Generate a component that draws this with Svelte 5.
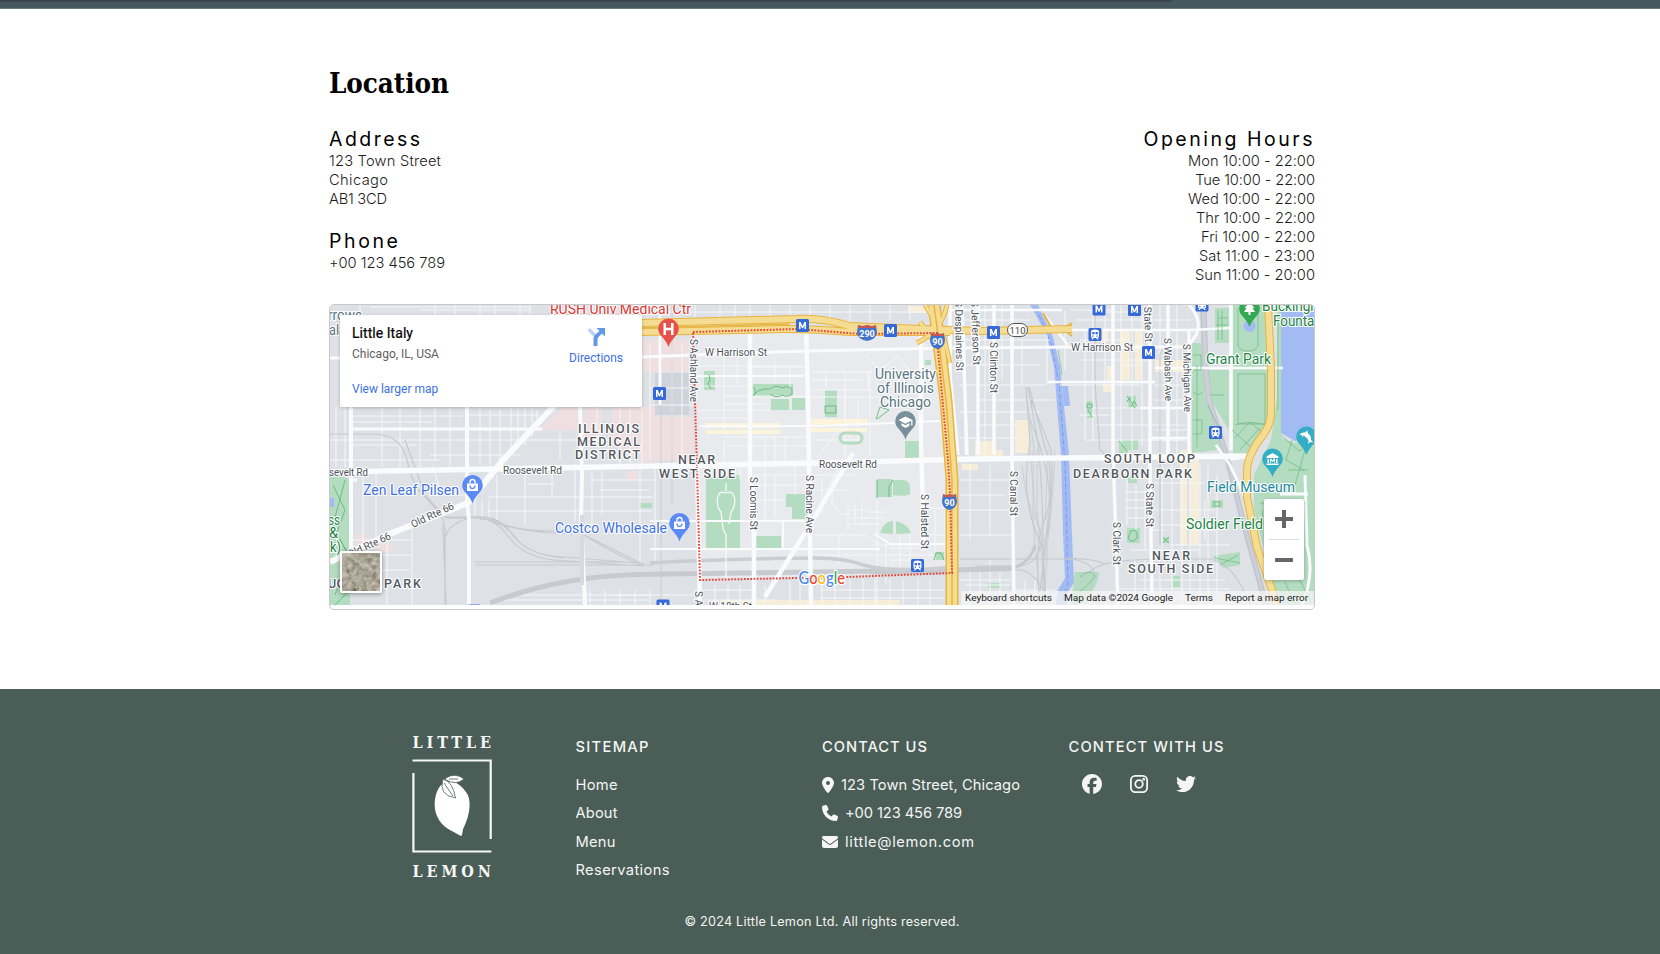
<script>
  // Spreads the letters of an element so that its text fills the given width.
  function fit(node, width) {
    const range = document.createRange();
    range.selectNodeContents(node);
    const natural = range.getBoundingClientRect().width;
    const count = node.textContent.length - 1;
    node.style.letterSpacing = (width - natural) / count + 'px';
  }

  const hours = [
    ['Mon 10:00 - 22:00', 127], ['Tue 10:00 - 22:00', 120], ['Wed 10:00 - 22:00', 127],
    ['Thr 10:00 - 22:00', 119], ['Fri 10:00 - 22:00', 114], ['Sat 11:00 - 23:00', 116], ['Sun 11:00 - 20:00', 120]
  ];
  const sitemap = [['Home', 42], ['About', 42], ['Menu', 40], ['Reservations', 94]];

  // text, x, baseline, length, class, rotation
  const labels = [
    ['rrows', 328, 320, 34, 'slate'], ['al', 329, 335, 10, 'slate'],
    ['RUSH Univ Medical Ctr', 550, 314, 141, 'red'],
    ['University', 875, 379, 61, 'slate'], ['of Illinois', 877, 393, 57, 'slate'], ['Chicago', 880, 407, 51, 'slate'],
    ['ILLINOIS', 578, 432.5, 61, 'area'], ['MEDICAL', 577, 445.5, 63, 'area'], ['DISTRICT', 575, 458.5, 65, 'area'],
    ['NEAR', 678, 464, 37, 'area'], ['WEST SIDE', 659, 477.5, 76, 'area'],
    ['SOUTH LOOP', 1104, 462.5, 91, 'area'], ['DEARBORN PARK', 1073, 477.5, 119, 'area'],
    ['NEAR', 1152, 559.5, 38, 'area'], ['SOUTH SIDE', 1128, 573, 85, 'area'],
    ['PARK', 384, 587.5, 37, 'area'], ['UG', 328, 587.5, 17, 'area'],
    ['Zen Leaf Pilsen', 363, 495, 96, 'shop'], ['Costco Wholesale', 555, 533, 112, 'shop'],
    ['ss', 328, 525, 12, 'park'], ['&', 329, 538, 9, 'park'], ['k)', 330, 552, 11, 'park'],
    ['Grant Park', 1206, 364, 65, 'park'], ['Buckingham', 1262, 311, 75, 'park'], ['Fountain', 1273, 325.5, 52, 'park'],
    ['Soldier Field', 1186, 529, 77, 'park'], ['Field Museum', 1207, 492, 88, 'teal'],
    ['W Harrison St', 705, 355.5, 62, 'road'], ['W Harrison St', 1071, 350.5, 62, 'road'],
    ['Roosevelt Rd', 819, 468, 58, 'road'], ['Roosevelt Rd', 503, 473.5, 59, 'road'], ['sevelt Rd', 329, 475.5, 39, 'road'],
    ['W 18th St', 709, 610, 43, 'road'],
    ['Old Rte 66', 413, 528, 46, 'road', -25], ['Old Rte 66', 350, 558, 46, 'road', -25],
    ['S Ashland Ave', 690, 339, 63, 'road', 90], ['S Loomis St', 750, 477, 53, 'road', 90],
    ['S Racine Ave', 806, 475, 58, 'road', 90], ['S Halsted St', 921, 494, 55, 'road', 90],
    ['S Desplaines St', 955, 301, 70, 'road', 89], ['S Jefferson St', 971, 301, 64, 'road', 88],
    ['S Clinton St', 990, 342, 51, 'road', 90], ['S Canal St', 1010, 471, 45, 'road', 90],
    ['S Clark St', 1113, 522, 43, 'road', 90], ['S State St', 1146, 483, 44, 'road', 90],
    ['State St', 1144, 307, 35, 'road', 88], ['S Wabash Ave', 1164, 338, 63, 'road', 89],
    ['S Michigan Ave', 1183, 344, 68, 'road', 89], ['S Ashland', 695, 591, 45, 'road', 90]
  ];
  const metro = [[802.5, 325.5], [890.5, 330.5], [659.5, 393.5], [993.5, 332.5], [1099, 309], [1134.5, 309.5], [1148.5, 352.5], [663, 606]];
  const trains = [[1095, 334.5], [1202, 305], [1215.5, 432.5], [917.5, 565.5], [474, 611]];
  const shields = [['290', 867, 333, 20], ['90', 937.5, 341, 15], ['90', 949.5, 502, 15]];
  const pins = [
    [668.5, 329, '#e8514a', 'H'], [472.5, 485.5, '#5b8af5', 'bag'], [679.5, 523.5, '#5b8af5', 'bag'],
    [905.5, 421.5, '#78909c', 'cap'], [1249.5, 309, '#34a853', 'tree'], [1272.5, 459, '#34aec4', 'museum'], [1306.5, 437, '#34aec4', 'fish']
  ];
</script>

<div class="page">
  <div class="strip"><i></i></div>

  <main>
    <h1><span use:fit={120}>Location</span></h1>
    <div class="info">
      <section>
        <h2><span use:fit={91}>Address</span></h2>
        <p><span use:fit={112}>123 Town Street</span></p>
        <p><span use:fit={59}>Chicago</span></p>
        <p><span use:fit={58}>AB1 3CD</span></p>
        <h2 class="second"><span use:fit={69}>Phone</span></h2>
        <p><span use:fit={116}>+00 123 456 789</span></p>
      </section>
      <section class="hours">
        <h2><span use:fit={169}>Opening Hours</span></h2>
        {#each hours as [line, width]}<p><span use:fit={width}>{line}</span></p>{/each}
      </section>
    </div>

    <div class="map">
      <svg class="canvas" viewBox="330 305 984 300" width="984" height="300">
        <defs>
          <filter id="ground" x="0" y="0" width="1" height="1">
            <feTurbulence type="fractalNoise" baseFrequency=".2" numOctaves="4" seed="8" />
            <feColorMatrix values=".55 .45 0 0 .06  .55 .42 0 0 .04  .5 .36 0 0 .02  0 0 0 0 1" />
            <feComponentTransfer>
              <feFuncR type="linear" slope=".8" intercept="-.04" /><feFuncG type="linear" slope=".8" intercept="-.04" /><feFuncB type="linear" slope=".8" intercept="-.05" />
            </feComponentTransfer>
          </filter>
        </defs>
        <rect x="330" y="305" width="984" height="300" fill="#dee2e7" />

        <g fill="#efdfe1">
          <path d="M640 340h48v32h-48zM538 430l27-23h13v23zM585 417h-3v22h20v-32h-17zM612 407h46v48h-30l-16-12zM650 417h43v43h-43zM640 450h13v13h-13zM627 471h11v9h-11zM356 534h11v12h-11zM376 543h16v9h-16z" />
        </g>
        <path d="M655 373h34v42h-34z" fill="#cfd4dc" />
        <path d="M693 332L800 329 823 331 860 333 938 333 943 400 952 573 700 579 697 467z" fill="#e8eaee" />
        <g fill="#f6eed8">
          <path d="M1015 420h14v33h-14zM975 441h18v13h-18zM1097 330h11v12h-11zM1120 330h10v50h-10zM1135 330h7v50h-7zM1103 384h9v8h-9zM1155 360h30v12h-30zM962 464h16v6h-16zM975 450h28v10h-28zM1180 450h7v95h-7zM1190 450h9v95h-9zM908 306h25v7h-25zM1107 366h7v16h-7zM720 600h180v5h-180z" />
          <path d="M705 423h75v5h-75zM706 430h74v4h-74zM811 419h57v6h-57zM811 428h56v4h-56z" fill="#fcf5dc" />
        </g>
        <g fill="#b4dcc0">
          <path d="M330 477q14-3 20 4v124h-20zM1192 343h9l8 60 18 46-35 4zM1208 370h21v60l-17-28zM1233 305h34v120l-17 29h-17zM1215 308h14v35h-14zM1277 305h4v133l14 5 19-4v166h-36l-24-95v-35l17-35 6-42z" />
          <path d="M704 371h11v19h-11zM753 384h40v13h-40zM706 478l34-3v73h-34zM756 536h25v12h-25zM786 494h21v25h-15v-12h-6zM877 479h15v18h-15zM893 480h10q7 1 7 7v7q-4 3-17 1zM880 533q4-12 13-12v13zM896 521q12 3 15 12l-15 1zM1000 583h-12v5h12zM1128 440h10v10h-10zM1128 476h9v7h-9z" />
          <path d="M771 399h18v11h-18zM792 398h13v12h-13zM825 390h12v27h-12zM905 441h16v17h-16zM1127 528h13v15h-13zM1119 440h9v13h-9zM1211 500h12v8h-12zM1163 537h6v6h-6zM1173 576h7v11h-7zM1128 396h8v12h-8zM1087 401h6v17h-6zM1075 572h24q-2 20-20 33h-8zM1212 556l28-4v13l-16 3zM640 503h12v5h-12zM934 552h10v8h-10zM925 360h6v5h-6z" />
        </g>
        <g fill="#a3bbf3">
          <path d="M1281 312h33v125l-19 4-14-8zM1030 305h8l15 32 7 30 9 88 3 80 2 48-7 10v12h-11l2-15 7-12-2-45-2-78-7-88-8-34z" />
          <circle cx="1249.500" cy="326" r="6" /><path d="M1062 386h6l2 20h-6zM330 498h4v9h-4z" />
        </g>
        <path d="M1036 308l15 35 8 40 6 80 3 120-6 20" fill="none" stroke="#6e94e8" stroke-width=".8" stroke-dasharray="5 2.500" />

        <g fill="none" stroke="#f5f7f9" stroke-width="1">
          <path d="M336 407v60M345 407v60M360 305v10M382 407v60M400 407v65M420 407v60M435 407v55M450 407v60M480 407v55M490 410v55M500 410v50M511 407v45M518 407v42M525 407v38M532 407v30M537 410v20M352 416h110M352 422h80M330 440h210M352 445h65M430 455h90M330 460h110M470 415h70M363 475v75M376 475v65M412 525v80M352 540h60M352 555h60M352 570h58M387 540v65M430 495h40M432 465l10 30" />
          <path d="M488 497h165M488 511h165M497 475v45M475 500v15M482 500v17M489 500v18M525 470v55M552 471v25M527 484h27M575 466v55M592 471v62M602 471v43M640 466v100M655 466v100M590 480h66M600 490h50M560 430v30M540 440h70M597 407v30M620 407v60M630 407v56M642 407v56M500 600h150M520 595h130M590 590v15M605 590v15M620 590v15M635 590v15M650 590v15M610 595h90M420 310h110M435 305v10M455 305v10M480 305v10M495 305v10M520 305v10M530 305v10M370 307h160" />
          <path d="M695 305v12M720 305v13M735 305v13M750 305v13M770 305v13M790 305v13M810 305v13M830 305v15M850 305v18M870 305v18M890 305v15M910 305v15M650 312h285M650 345v115M660 340v30M672 345v110M682 345v110M650 388h43M650 405h43M700 366h100M700 386h52M724 358v72M737 358v26M775 358v25M790 368v20M700 410h70M700 418h50M724 396h80M724 404h42M752 397h130M724 437h85M724 446h85M724 440v22M765 437v70M775 437v30M785 437v25M752 367h55M780 375h27M812 372h60M812 380h50M868 372v18M845 372v55M826 373v15M812 390h60M845 388v70M858 400v40M870 370v85M820 455l20-28 20 20M812 440h50M865 355l15 15 18-14 14 18M880 370l12 18 18-22" />
          <path d="M755 475h50M755 485h45M765 477v45M775 477v40M795 465v30M758 500h25M812 475h45M812 490h38M822 478v35M832 480v25M840 465l-15 30M830 500l10 14h10M845 510h25M848 505v25M855 505v20M862 500v25M868 512h18M850 518h35M850 524h30M740 466v13M815 535h50l15 10h40M783 521v28M839 534v30M815 555h120M877 500v105M886 535v50M900 535v40M910 535v30M935 510v50M945 510v40M925 508h25M925 535h20M890 548h28M890 560h25M726 550v28" />
          <path d="M705 590h50M705 600h70M715 585v20M728 585v20M740 585v20M765 585v20M790 580v25M800 580v25M822 582v23M835 580v25M850 579v26M863 579v26M875 579v26M890 579v26M903 579v26M918 579v26M930 579v26M820 590h125M820 598h125" />
          <path d="M960 320h70M960 340h90M960 365h80M960 385h85M975 400h80M960 412h80M975 425h40M960 438h60M965 330v125M985 305v150M1002 305v75M1022 335v50M1047 335v50M1060 385h80M1085 330v110M1093 305v135M1105 315v70M1121 305v140M1132 305v145M1142 315v130M1160 305v150M1177 305v150M1075 320h115M1090 312h50M1080 360h70M1075 382h75M1090 408h100M1080 415h30M1095 425h90M1155 385h30M1155 400h30M1155 430h33M1150 440h38M1080 340h50M1123 350h15M1123 365h15M1070 310h45M1085 440h95" />
          <path d="M960 480h50M960 495h45M960 510h50M970 465v75M990 465v70M960 535h55M1065 310v60M1127 480v45M1136 485v45M1145 490v60M1125 492h25M1125 500h25M1125 508h22M1125 518h20M1155 483h50M1155 510h60M1160 525h50M1162 465v85M1172 465v140M1182 465v140M1190 465v140M1200 465v140M1208 465v140M1217 475v120M1130 550h70M1140 580h85M1120 589h110M1120 598h130M1135 560v45M1145 560v45M1160 570v35M1170 545h60M960 570h50M960 580h50M965 585h45M970 570v35M980 570v35M990 560v45M1000 565v40M1025 580v25M1035 580v25M1015 590h40M1150 530h15M1205 500v40M1192 530h25" />
        </g>

        <g fill="none" stroke="#c6cace" stroke-width="1.200">
          <path d="M330 434h45q28 1 33 30 5 22 15 30l17 20q6 8 5 25v65M405 440l20 55 20 22h25q30-2 42 17 12 18 40 22l85 7M445 518h30q20 0 33 18 14 20 45 24l90 6M475 517q18-1 28 7 15 7 50 7h25q35 23 62 33M480 519q22 0 35 18 12 17 48 21M490 521q20 8 60 12h30q30 15 65 32M445 545q-2-20 25-27M475 562h155M475 565h180M443 525l3 80" />
          <path d="M1026 387l4 55q-6 38-2 58 4 30 15 46l3 60M1028 387l10 55q5 50 5 105v58M1029 387l20 75q4 40-5 60-10 20-4 83M1031 400l20 50q3 40-3 70l-10 90M1030 420q30 70 15 125M975 566h45q18-3 20-20M975 570h45q18 2 30 35M960 559h100q30-2 45 5 20-5 60-5h45q25 5 40 46M1108 563q-30 7-35 42M1065 559q25 0 30 15l-10 30M1095 305v80l5 65q15 10 15 40M1168 335l-8 20v190" />
          <path d="M661 305v300M672 305v200M1028 500l20 50-5 55M1022 466q8 60 24 90M1055 450q-2 60-10 110M1033 450v70l7 80M1037 450v60l8 80M1027 400l8 55M1030 450l5 60 10 45M1048 450l-3 70" stroke-width=".8" />
        </g>
        <path d="M490 603q40-15 75-21 40-8 100-8l290-4 60-2" fill="none" stroke="#c7cbd0" stroke-width="5" />
        <path d="M650 563q70-4 165-5 30 0 48 7 30 8 92 2" fill="none" stroke="#cacdd2" stroke-width="3.500" />
        <path d="M870 573h80M955 570h50q25-4 30-25" fill="none" stroke="#c7cbd0" stroke-width="3" />
        <path d="M1203 305l2 62 4 35 18 55 15 60 24 88" fill="none" stroke="#cdd0d7" stroke-width="6" />
        <path d="M1201 305l2 62 4 35 18 55 15 60 24 88M1206 305l2 62 4 35 17 55 15 60 24 88" fill="none" stroke="#babec7" stroke-width=".8" />

        <g fill="none" stroke="#fafbfc">
          <path d="M351 407v145M467 407v95l2 18v85M580 407l2 70-1 40 4 88" stroke-width="4" />
          <path d="M582 515v70" stroke="#d8dadf" stroke-width="4" />
          <path d="M330 358h12M352 429h190M352 480h5M640 357l165-6 145-3 130-1h105M660 305v100" stroke-width="3" />
          <path d="M330 472l325-6 160-3 160-4 275-3" stroke-width="5.500" />
          <path d="M556 404l-53 56-18 22-17 21-76 30-62 29" stroke-width="6" />
          <path d="M750 332v145l4 20v108M806 325l2 70 1 70 2 140M921 335v110l3 95M853 453l-43 72-45 72M697 467l3 138" stroke-width="4.500" />
          <path d="M693 376h110M700 426h120l120-5M650 521h155M650 549h230M783 521v28M875 534l15 10h60" stroke-width="2" />
          <path d="M950 305v70l8 80M962 305l5 150M978 305v150M994 305v150M1012 305v150l2 150M1113 305v145l5 155M1150 305v160l2 140M1168 305v150M1189 330v125M1231 305v145M1250 456l-20 3" stroke-width="3.500" />
          <path d="M952 310h110M1072 330h120l38-2M1155 368h128M1140 408h48M1150 438h38M1048 382h107M1043 313l25 32" stroke-width="2.500" />
          <path d="M1189 305q14 15 7 30l-8 12M1216 445l14 20 16 35M1305 475l2 70q8 30-5 60M1280 494h28" stroke-width="3" />
        </g>

        <g fill="none" stroke="#63b87b" stroke-width=".9">
          <path d="M333 485l12 25-9 25 14 20-15 40M345 480l-12 45 15 30M340 575l10 15-15 15M709 375l1 5-2 4 3 5M753 387q5 5 0 9l5-5q7-3 12-2 5-5 12-1 6-3 10 1v5q-5 4-10 1-6 4-12-1M825 406h11v7h-11zM876 419l4-12 9 3-12 9M877 480v18M893 480l-4 7v10M1087 404h5v4h-5zM1088 410l4 7M1127 402q2-5 4-3M1131 407l3-6 3 5M1127 396l8 12M1119 441l8 10M1131 531q7-3 6 7-5 6-9 0zM1214 502h6v4h-6zM1163 538l6 5M1169 537l-6 6M934 560l2-7h5l3 7" />
          <path opacity=".7" d="M1238 308v38q3 5 10 5t10-5v-38M1218 310v30M1222 311v29M1216 325h12M1218 318h10M1238 374h27v50h-27zM1235 425q12-5 32 0M1235 438l15-16 13 11M1240 450l20-22M1193 355h8v15h-8M1193 392q6 5 10 0M1193 420h9v14h-9M1197 365v82M1232 430l20 18M1278 320v90M1281 435l18 16 15-8M1288 470h20M1260 503h45M1262 510l5 44M1292 440l-6 20 18 10M1305 450l-10 35M1285 582l10 22M1300 580l10 20M1080 577q10-10 15-1-10 14-20 18M1215 558l25 5M1220 565l18-10M1058 350l4 25M1208 405l14 30M1210 395h14" />
          <rect x="840" y="433" width="22" height="10" rx="5" fill="none" stroke="#b4dcc0" stroke-width="3" />
        </g>
        <path d="M726 483v8M726 493c-10-5-11 12-5 19l2 17 3 6v44M726 493c10-5 11 12 5 19l-2 12" fill="none" stroke="#f6f9f8" stroke-width="1.300" />

        <g fill="none" stroke="#e8b53e" stroke-width="8">
          <path d="M640 323l157-4q22-2 53 7l70 3 60 2 92-2" />
          <path d="M640 332l143-3q35 0 67 3h100" />
          <path d="M934 305l4 30 8 65 6 80v125" stroke-width="13" />
          <path d="M1268 305l3 62v45q0 15-12 28-12 18-12 30v27l10 50 15 43 6 20" />
          <path d="M925 305l18 28 7 30M947 305q-5 25-30 38M920 322l18 25" stroke-width="5" />
          <path d="M1043 313l8 14M1066 327l6-4M1066 331l6 5" stroke-width="2" />
        </g>
        <g fill="none" stroke="#f4dc92" stroke-width="6">
          <path d="M640 323l157-4q22-2 53 7l70 3 60 2 92-2" /><path d="M640 332l143-3q35 0 67 3h100" />
          <path d="M934 305l4 30 8 65 6 80v125" stroke-width="10" />
          <path d="M1268 305l3 62v45q0 15-12 28-12 18-12 30v27l10 50 15 43 6 20" />
          <path d="M925 305l18 28 7 30M947 305q-5 25-30 38M920 322l18 25" stroke-width="3" />
        </g>
        <path d="M934 305l4 30 8 65 6 80v125M640 328l150-4M330 333h12" fill="none" stroke="#e8b53e" stroke-width="1.500" />
        <path d="M693 332l104-3 26 2 37 3 77-1 1 17 10 110 2 33 2 80-105 4-147 3-3-112z" fill="none" stroke="#ea4335" stroke-width="2" stroke-dasharray="1.700 1.500" />

        {#each labels as [text, x, y, length, kind, turn]}
          <text class={kind} textLength={length} lengthAdjust={kind === 'area' ? 'spacing' : 'spacingAndGlyphs'} transform={`translate(${x} ${y}) rotate(${turn || 0})`}>{text}</text>
        {/each}

        {#each metro as [x, y]}
          <g transform={`translate(${x} ${y})`}>
            <rect x="-6.500" y="-6.500" width="13" height="13" rx="1.500" fill="#3568d9" />
            <path d="M-3.500 3.500v-7h1.700L0 .7l1.800-4.200h1.700v7H2v-4L.6 2.700H-.6L-2-.5v4z" fill="#fff" />
          </g>
        {/each}
        {#each trains as [x, y]}
          <g transform={`translate(${x} ${y})`}>
            <rect x="-6.500" y="-6.500" width="13" height="13" rx="1.500" fill="#3568d9" />
            <path d="M-4-3q0-2 4-2t4 2v5q0 1-1.500 1.500L4 5H2.500L1 3.500h-2L-2.500 5H-4l1.500-1.500Q-4 3-4 2z" fill="#fff" />
            <path d="M-2.800-2.500h2.300v2.300h-2.300zM.5-2.500h2.300v2.300H.5zM-2.800 1h1.300v1.300h-1.300zM1.500 1h1.300v1.300H1.500z" fill="#3568d9" />
          </g>
        {/each}
        {#each shields as [text, x, y, w]}
          <g transform={`translate(${x} ${y})`}>
            <path d={`M${-w / 2 + 1}-8q${w / 4} 2 ${w / 2 - 1} 0 ${w / 4} 2 ${w / 2 - 1} 0l1 7q0 7-${w / 2} 9-${w / 2}-2-${w / 2}-9z`} fill="#4475c9" />
            <path d={`M${-w / 2 + 1}-8q${w / 4} 2 ${w / 2 - 1} 0 ${w / 4} 2 ${w / 2 - 1} 0v3h${-w + 2}z`} fill="#c65752" />
            <text class="number" text-anchor="middle" y="4">{text}</text>
          </g>
        {/each}
        <rect x="1007.500" y="323.500" width="20" height="13" rx="6.500" fill="#fff" stroke="#555" />
        <text x="1017.500" y="333.500" text-anchor="middle" class="oval">110</text>

        {#each pins as [x, y, color, sign]}
          <g transform={`translate(${x} ${y})`}>
            <path d="M0-10.500A10.300 10.300 0 0 1 10.300-.2C10.300 7 3.500 8 0 18 -3.500 8-10.300 7-10.300-.2A10.300 10.300 0 0 1 0-10.500z" fill={color} />
            {#if sign === 'H'}
              <path d="M-5-6h2.500v4.700h5V-6H5V6H2.500V1.200h-5V6H-5z" fill="#fff" />
            {:else if sign === 'bag'}
              <path d="M-5.500-2h11v7.500h-11z" fill="#fff" /><path d="M-2.500-2v-1.500a2.500 2.500 0 0 1 5 0V-2" fill="none" stroke="#fff" stroke-width="1.400" />
              <path d="M-2.500 0a2.500 3 0 0 0 5 0" fill="none" stroke={color} stroke-width="1.300" />
            {:else if sign === 'cap'}
              <path d="M-7-1.500L0-5l7 3.500V4H5.700V-.7L0 2.300zM-4 1.500L0 3.700l4-2.200v2.800L0 6.500-4 4.300z" fill="#fff" />
            {:else if sign === 'tree'}
              <path d="M0-7l5 6H3l2.500 4H1v3h-2V3h-4.500L-3-1h-2z" fill="#fff" />
            {:else if sign === 'museum'}
              <path d="M-6-2.500L0-6l6 3.500V-1H-6zM-5 0h1.500v4H-5zM3.500 0H5v4H3.500zM-6 4.500H6V6H-6zM-2.500 3.500V-.5h1L0 1.500 1.500-.5h1v4h-1v-2L0 3-1.500 1.500v2z" fill="#fff" />
            {:else}
              <path d="M-7-2.500Q-5-5-1.500-4.500L1-6.500 1.500-3.500Q5-1 4.500 3L7 5.500 3.500 5 1.500 7 2 3.500Q0 0-3-1.500L-4 .5-4.500-1.700z" fill="#fff" />
            {/if}
          </g>
        {/each}
        <text class="google" x="798.500" y="583.500" textLength="46.500" lengthAdjust="spacingAndGlyphs"><tspan fill="#4285f4">G</tspan><tspan fill="#ea4335">o</tspan><tspan fill="#fbbc05">o</tspan><tspan fill="#4285f4">g</tspan><tspan fill="#34a853">l</tspan><tspan fill="#ea4335">e</tspan></text>
        <rect x="961" y="591" width="353" height="14" fill="#f5f5f5" opacity=".75" />
        <g class="legal">
          <text x="965" y="601" textLength="87" lengthAdjust="spacingAndGlyphs">Keyboard shortcuts</text>
          <text x="1064" y="601" textLength="109" lengthAdjust="spacingAndGlyphs">Map data ©2024 Google</text>
          <text x="1185" y="601" textLength="28" lengthAdjust="spacingAndGlyphs">Terms</text>
          <text x="1225" y="601" textLength="83" lengthAdjust="spacingAndGlyphs">Report a map error</text>
        </g>
      </svg>

      <div class="card">
        <div class="place">
          <strong><span use:fit={61}>Little Italy</span></strong>
          <span>Chicago, IL, USA</span>
          <a href="#map">View larger map</a>
        </div>
        <div class="directions">
          <svg width="20" height="20" viewBox="0 0 20 20">
            <path d="M1.500 3.500L4 1l6.500 6.500-2.500 2.500z" fill="#bcd2f5" />
            <path d="M10.500 1H19v8.500l-3-3-3.500 3.500q-1 1-1 2.500V19H7.500v-7q0-2.500 2-4.500L13.500 4z" fill="#6398e8" />
          </svg>
          <a href="#route">Directions</a>
        </div>
      </div>

      <div class="satellite"><svg width="38" height="38"><rect width="38" height="38" filter="url(#ground)" /></svg></div>

      <div class="zoom">
        <svg width="40" height="40" viewBox="0 0 40 40"><path d="M11 20h18M20 11v18" stroke="#666" stroke-width="4" /></svg>
        <i></i>
        <svg width="40" height="40" viewBox="0 0 40 40"><path d="M11 20h18" stroke="#666" stroke-width="4" /></svg>
      </div>
    </div>
  </main>

  <footer>
    <div class="columns">
      <div class="brand">
        <svg viewBox="412 736 80 144" width="80" height="144">
          <g class="wordmark">
            <text x="412.500" y="748.500" textLength="78.500">LITTLE</text>
            <text x="412.500" y="877.500" textLength="78.500">LEMON</text>
          </g>
          <path d="M412.500 761.500h78.200v78.500M413.400 774v78.500h78" fill="none" stroke="#f6f7f6" stroke-width="2.200" />
          <path d="M441 786C434 794 433 808 437 817C442 829 451 831 461 837C463 836 462 831 464 828C470 816 472 800 466 793C462 787 457 784 452 782Z" fill="#fff" />
          <g stroke="#495e57" stroke-width=".8">
            <path d="M446 779Q455 773 464 780 456 787 445 780.500z" fill="#fff" />
            <path d="M443 780Q453 783 455.500 799 438 796 443 780z" fill="#fff" />
            <path d="M444 784l9 13M449 780h9" fill="none" />
          </g>
        </svg>
      </div>
      <div>
        <h3><span use:fit={73}>SITEMAP</span></h3>
        {#each sitemap as [name, width]}<p><span use:fit={width}>{name}</span></p>{/each}
      </div>
      <div>
        <h3><span use:fit={105}>CONTACT US</span></h3>
        <p>
          <svg width="12" height="16" viewBox="0 0 384 512"><path d="M215.700 499.200C267 435 384 279.400 384 192C384 86 298 0 192 0S0 86 0 192c0 87.400 117 243 168.300 307.200c12.300 15.300 35.100 15.300 47.400 0zM192 128a64 64 0 1 1 0 128 64 64 0 1 1 0-128z" /></svg>
          <span use:fit={179}>123 Town Street, Chicago</span>
        </p>
        <p>
          <svg width="16" height="16" viewBox="0 0 512 512"><path d="M164.900 24.600c-7.700-18.600-28-28.500-47.400-23.200l-88 24C12.100 30.200 0 46 0 64C0 311.400 200.600 512 448 512c18 0 33.800-12.100 38.600-29.500l24-88c5.300-19.400-4.600-39.700-23.200-47.400l-96-40c-16.300-6.800-35.200-2.100-46.300 11.600L304.700 368C234.300 334.700 177.300 277.700 144 207.300L193.300 167c13.700-11.200 18.400-30 11.600-46.300l-40-96z" /></svg>
          <span use:fit={117}>+00 123 456 789</span>
        </p>
        <p>
          <svg width="16" height="16" viewBox="0 0 512 512"><path d="M48 64C21.500 64 0 85.500 0 112c0 15.100 7.100 29.300 19.200 38.400L236.800 313.600c11.400 8.500 27 8.500 38.400 0L492.800 150.400c12.100-9.100 19.200-23.300 19.200-38.400c0-26.500-21.500-48-48-48H48zM0 176V384c0 35.300 28.700 64 64 64H448c35.300 0 64-28.700 64-64V176L294.400 339.200c-22.800 17.100-54 17.100-76.800 0L0 176z" /></svg>
          <span use:fit={129}>little@lemon.com</span>
        </p>
      </div>
      <div>
        <h3><span use:fit={155}>CONTECT WITH US</span></h3>
        <div class="social">
          <svg width="20" height="20" viewBox="0 0 512 512"><path d="M512 256C512 114.600 397.400 0 256 0S0 114.600 0 256C0 376 82.700 476.800 194.200 504.500V334.200H141.400V256h52.800V222.300c0-87.100 39.400-127.500 125-127.500c16.200 0 44.200 3.200 55.700 6.400V172c-6-.6-16.500-1-29.600-1c-42 0-58.200 15.900-58.200 57.200V256h83.600l-14.400 78.200H287V510.100C413.800 494.800 512 386.900 512 256z" /></svg>
          <svg width="20" height="20" viewBox="0 0 20 20" class="outline"><rect x="1.900" y="1.900" width="16.200" height="16.200" rx="4.300" /><circle cx="10" cy="10" r="3.800" /><circle cx="14.700" cy="5.300" r=".6" /></svg>
          <svg width="20" height="20" viewBox="0 0 512 512"><path d="M459.370 151.716c.325 4.548.325 9.097.325 13.645 0 138.720-105.583 298.558-298.558 298.558-59.452 0-114.680-17.219-161.137-47.106 8.447.974 16.568 1.299 25.340 1.299 49.055 0 94.213-16.568 130.274-44.832-46.132-.975-84.792-31.188-98.112-72.772 6.498.974 12.995 1.624 19.818 1.624 9.421 0 18.843-1.300 27.614-3.573-48.081-9.747-84.143-51.980-84.143-102.985v-1.299c13.969 7.797 30.214 12.670 47.431 13.319-28.264-18.843-46.781-51.005-46.781-87.391 0-19.492 5.197-37.360 14.294-52.954 51.655 63.675 129.300 105.258 216.365 109.807-1.624-7.797-2.599-15.918-2.599-24.040 0-57.828 46.782-104.934 104.934-104.934 30.213 0 57.502 12.670 76.670 33.137 23.715-4.548 46.456-13.320 66.599-25.340-7.798 24.366-24.366 44.833-46.132 57.827 21.117-2.273 41.584-8.122 60.426-16.243-14.292 20.791-32.161 39.308-52.628 54.253z" /></svg>
        </div>
      </div>
    </div>
    <small><span use:fit={275}>© 2024 Little Lemon Ltd. All rights reserved.</span></small>
  </footer>
</div>

<style>
  :global(body) { margin: 0; background: #fff; }
  .page { height: 954px; overflow: hidden; font-family: Inter, Roboto, sans-serif; }
  .strip { height: 8px; background: #47575e; border-bottom: 1px solid #6c787d; }
  .strip i { display: block; width: 1172px; height: 2px; background: #39444c; border-bottom-right-radius: 4px; }
  main { box-sizing: border-box; width: 986px; height: 680px; margin-left: 329px; padding-top: 55px; }
  h1, h2, h3, p { margin: 0; font-weight: 400; white-space: nowrap; }
  h1 { font: bold 27.500px/39px "DejaVu Serif Condensed", "DejaVu Serif", serif; font-stretch: condensed; height: 40px; }
  .info { display: flex; justify-content: space-between; height: 178.500px; padding-top: 21.500px; }
  h2 { font-size: 19.500px; line-height: 26px; color: #000; }
  .second { margin-top: 19px; }
  .info p { font-size: 14.700px; line-height: 19px; font-weight: 300; color: #1c1c1c; }
  .hours { text-align: right; }
  .map { position: relative; box-sizing: border-box; width: 986px; height: 306px; border: 1px solid #c8c8c8; border-radius: 5px; overflow: hidden; font-family: Roboto, sans-serif; }
  .canvas { display: block; }
  .canvas text { font-family: Roboto, sans-serif; font-size: 14px; paint-order: stroke; stroke: #fff; stroke-width: 2.200px; stroke-linejoin: round; }
  .canvas .road { font-size: 10.500px; fill: #4c5157; }
  .canvas .area { font-size: 12.500px; font-weight: 500; fill: #53575d; }
  .canvas .slate { fill: #5a7483; }
  .canvas .red { fill: #d93732; }
  .canvas .shop { fill: #3e70e2; }
  .canvas .park { fill: #218344; }
  .canvas .teal { fill: #218899; }
  .canvas .number { font-size: 9px; font-weight: 700; fill: #fff; stroke: none; }
  .canvas .oval { font-size: 9.500px; fill: #444; stroke: none; }
  .canvas .google { font-family: Lato, sans-serif; font-size: 17px; font-weight: 500; stroke-width: 2.500px; }
  .canvas .legal text { font-size: 9.700px; fill: #222; stroke: none; }
  .card { position: absolute; left: 10px; top: 10px; box-sizing: border-box; width: 302px; height: 92px; padding: 8px 19px 0 12px; display: flex; justify-content: space-between; background: #fff; border-radius: 2px; box-shadow: 0 1px 4px -1px rgba(0, 0, 0, .35); font-size: 12px; }
  .place { display: flex; flex-direction: column; line-height: 16px; color: #5f6063; }
  .place strong { font-size: 14px; line-height: 20px; font-weight: 400; color: #000; margin-bottom: 3px; -webkit-text-stroke: .2px #000; }
  .place a { margin-top: 19px; }
  .card a { color: #3d6fe4; text-decoration: none; }
  .directions { display: flex; flex-direction: column; align-items: center; line-height: 16px; padding-top: 4px; }
  .directions svg { margin-bottom: 3px; }
  .satellite { position: absolute; left: 10px; top: 246px; width: 38px; height: 38px; border: 2px solid #fff; border-radius: 2px; box-shadow: 0 1px 4px rgba(0, 0, 0, .4); }
  .satellite svg { display: block; }
  .zoom { position: absolute; left: 934px; top: 194px; width: 40px; height: 81px; background: #fff; border-radius: 2px; box-shadow: 0 1px 4px -1px rgba(0, 0, 0, .4); display: flex; flex-direction: column; align-items: center; }
  .zoom i { width: 30px; height: 1px; background: #ddd; }
  footer { height: 265px; box-sizing: border-box; background: #4a5d56; color: #f4f5f4; padding: 46px 0 0 329px; }
  .columns { display: grid; grid-template-columns: repeat(4, 246.500px); width: 986px; height: 176.500px; }
  .brand { display: flex; justify-content: center; }
  .wordmark text { font: bold 16px "DejaVu Serif Condensed", "DejaVu Serif", serif; fill: #f6f7f6; }
  h3 { font-size: 14.700px; line-height: 24px; font-weight: 500; margin-bottom: 11.500px; }
  footer p { display: flex; align-items: center; gap: 7px; height: 28.500px; font-size: 14.700px; }
  footer p svg { fill: currentColor; }
  .social { display: flex; gap: 27px; padding: 3.500px 0 0 13px; fill: currentColor; }
  .outline { fill: none; stroke: currentColor; stroke-width: 1.800; }
  small { display: block; width: 986px; text-align: center; font-size: 12.700px; line-height: 20px; }
</style>
